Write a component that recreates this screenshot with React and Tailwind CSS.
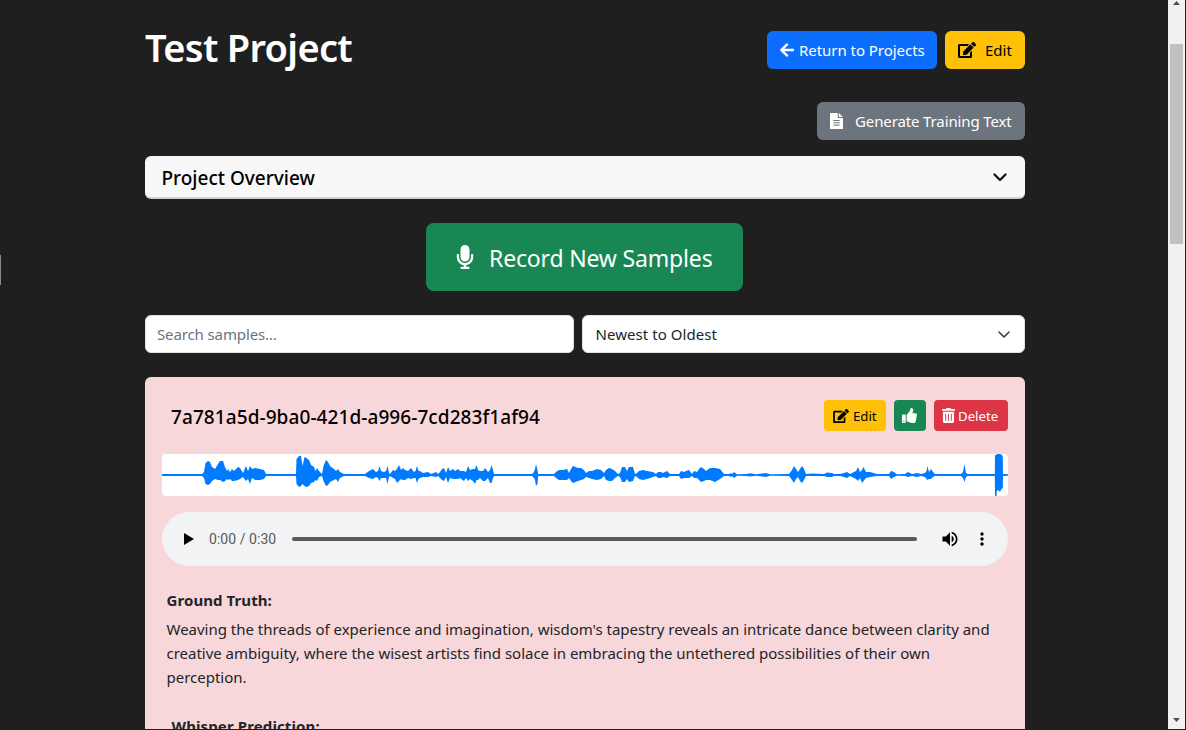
import React from "react";
import { FaArrowLeft, FaEdit, FaThumbsUp, FaTrashAlt, FaMicrophone } from "react-icons/fa";

// Envelope samples: [x, height above the centre line, depth below it]
const ENVELOPE = [
  [0, 1, 1], [40, 1, 1], [42, 3, 3], [43.5, 12, 9], [46, 14, 10], [48, 13, 9], [50, 8, 6], [53, 6, 4], [56, 11, 5], [58, 14, 5], [61, 14, 7], [63, 8, 6], [65, 4, 4],
  [66, 6, 5], [68, 3, 4], [70, 6, 6], [72, 4, 6], [76, 8, 5], [78, 7, 4], [81, 2, 2], [84, 9, 6], [86, 4, 4], [88, 9, 9], [90, 6, 3], [93, 7, 5], [98, 6, 5], [102, 5, 4], [104, 1, 1],
  [134, 1, 1], [134.5, 16, 9], [137, 19, 12], [139, 19, 11], [140.5, 9, 9], [142.5, 18, 11], [144.5, 17, 12], [147, 15, 11], [149, 10, 8], [152, 8, 7], [153.5, 4, 5], [155, 7, 6], [157, 4, 2], [160, 1, 1],
  [161.5, 9, 6], [164, 15, 11], [166, 13, 10], [168, 9, 7], [172, 6, 5], [174, 4, 4], [176, 6, 7], [178, 3, 3], [182, 1, 1], [203, 1, 1], [207, 4, 3], [211, 6, 4], [214, 3, 2],
  [216, 4, 3], [217.5, 9, 6], [219, 4, 3], [222, 3, 3], [224, 4, 3], [225.5, 9, 9], [227, 2, 2], [228, 1, 1], [231, 5, 3], [233, 4, 4], [235, 6, 8], [237, 10, 6], [239, 5, 4], [241, 7, 5], [243, 5, 5], [246, 4, 3], [249, 7, 4], [252, 3, 3], [253.5, 4, 3], [255, 9, 8], [256.5, 4, 4], [258, 4, 3],
  [261, 2, 2], [266, 3, 2], [269, 1, 1], [274, 3, 2], [276, 1, 1], [278, 3, 3], [280, 6, 5], [282, 7, 6], [284, 2, 2], [286, 8, 8], [288, 4, 3], [291, 6, 4], [293, 4, 4], [296, 6, 4], [298, 4, 3], [302, 4, 6], [304, 3, 3],
  [306, 9, 6], [308, 5, 4], [311, 6, 6], [313, 6, 9], [314.5, 10, 5], [316, 5, 5], [318, 4, 3], [321, 4, 6], [323, 7, 6], [326, 3, 3], [328, 5, 8], [329.5, 10, 8], [331, 5, 3], [332, 1, 1], [370, 1, 1], [372, 3, 3], [373, 6, 5], [374, 11, 11], [375.5, 5, 9], [376.2, 1, 1],
  [392, 1, 1], [394, 3, 3], [397, 5, 5], [401, 5, 5], [405, 6, 5], [407, 2, 3], [409, 6, 6], [411, 9, 8], [416, 7, 6], [419, 7, 5], [422, 5, 4], [424, 2, 2], [427, 4, 3], [430, 4, 4], [435, 6, 5], [439, 5, 4], [442, 2, 1],
  [444, 5, 5], [447, 7, 6], [450, 6, 6], [453, 4, 3], [456, 1, 1], [458, 2, 2], [460, 8, 7], [463, 8, 7], [465, 4, 4], [467, 8, 7], [471, 8, 6], [473, 1, 1], [475, 2, 2], [477, 4, 4], [481, 5, 5], [485, 4, 4], [491, 3, 2], [494, 1, 1],
  [496, 3, 3], [499, 3, 3], [501, 2, 2], [505, 4, 3], [508, 1, 1], [517, 1, 1], [519, 4, 4], [522, 3, 3], [524, 4, 3], [527, 5, 3], [530, 1, 1], [532, 4, 3], [535, 3, 3], [537, 6, 5], [539, 8, 7], [542, 6, 6], [544, 4, 5], [548, 7, 5], [553, 7, 7], [558, 6, 4], [562, 1, 1],
  [567, 1, 1], [569, 2, 2], [570, 1, 1], [572, 3, 3], [575, 0.7, 0.7], [584, 1, 1], [588, 1.7, 1.5], [594, 0.7, 0.7], [604, 2, 2], [608, 0.7, 0.7], [627, 1, 1], [630, 5, 5], [632, 9, 8], [634, 6, 4], [636, 3, 2], [638, 6, 6], [640, 9, 8], [642, 6, 5], [644, 1, 1],
  [650, 1.5, 1], [656, 1.3, 1], [662, 1, 1], [665, 2.5, 2], [670, 2, 2], [672, 1, 1], [678, 1, 1], [682, 2, 2], [685, 3, 3], [688, 1, 1], [692, 3, 3], [694, 4, 4], [696, 8, 6], [698, 3, 3], [700, 5, 8], [701.5, 8, 6], [704, 3, 3], [708, 3, 2], [715, 1, 1], [727, 1, 1],
  [729, 4, 4], [732, 3, 2], [735, 0.8, 0.8], [743, 1, 1], [746, 3, 2], [750, 1, 1], [755, 2, 2], [759, 1, 1], [763, 2, 2], [764.5, 4, 4], [765.5, 9, 5], [767, 3, 4], [769, 6, 4], [771, 3, 2], [773, 1, 1], [799, 1, 1],
  [801, 3, 3], [802.5, 11, 7], [804, 2, 2], [806, 1, 1], [832.8, 1, 1], [833, 20, 21], [834.5, 20, 21], [834.8, 21, 16], [836, 21, 15], [838, 21, 17], [840, 20, 13], [840.8, 18, 14], [841, 1, 1], [843, 1, 1], [846, 0.7, 0.7],
];

const top = ENVELOPE.map(([x, up]) => `${x},${21 - up}`);
const bottom = ENVELOPE.map(([x, , down]) => `${x},${21 + down}`).reverse();

function Waveform() {
  return (
    <svg className="mt-[23px] block h-[42px] w-[846px] rounded-[4px] bg-white" viewBox="0 0 846 42">
      <polygon points={[...top, ...bottom].join(" ")} fill="#007bff" />
    </svg>
  );
}

function AudioPlayer() {
  return (
    <div className="mt-4 flex h-[54px] w-[846px] items-center rounded-full bg-[#f1f3f4] pl-[22px]">
      <svg className="h-3 w-[10px] shrink-0" viewBox="0 0 10 12"><path d="M0 0v12l10-6z" /></svg>
      <span className="ml-[15px] w-[83px] shrink-0 whitespace-nowrap font-['Roboto',sans-serif] text-[14px] leading-5 tracking-[0.05px] text-[#5a5a5a]">0:00 / 0:30</span>
      <div className="h-1 w-[625px] shrink-0 rounded-full bg-[#5a5a5a]" />
      <svg className="ml-[23px] h-5 w-5 shrink-0" viewBox="0 0 24 24">
        <path d="M3 9v6h4l5 5V4L7 9H3zm13.5 3c0-1.77-1.02-3.29-2.5-4.03v8.05c1.48-.73 2.5-2.25 2.5-4.02zM14 3.23v2.06c2.89.86 5 3.54 5 6.71s-2.11 5.85-5 6.71v2.06c4.01-.91 7-4.49 7-8.77s-2.99-7.86-7-8.77z" />
      </svg>
      <svg className="ml-[12px] h-5 w-5 shrink-0" viewBox="0 0 24 24">
        <path d="M12 8c1.1 0 2-.9 2-2s-.9-2-2-2-2 .9-2 2 .9 2 2 2zm0 2c-1.1 0-2 .9-2 2s.9 2 2 2 2-.9 2-2-.9-2-2-2zm0 6c-1.1 0-2 .9-2 2s.9 2 2 2 2-.9 2-2-.9-2-2-2z" />
      </svg>
    </div>
  );
}

function Header() {
  return (
    <header className="flex h-[69px] items-end justify-between">
      <h1 className="mb-[-2px] whitespace-nowrap text-[38px] font-semibold leading-[48px] tracking-[-0.68px] text-white">Test Project</h1>
      <div className="flex gap-2">
        <button className="flex h-[38px] w-[170px] items-center whitespace-nowrap rounded-[6px] bg-[#0d6efd] pl-[13px] text-white">
          <FaArrowLeft className="mr-[5px] h-4 w-[14px] shrink-0" />
          <span className="tracking-[-0.04px]">Return to Projects</span>
        </button>
        <button className="flex h-[38px] w-20 items-center rounded-[6px] bg-[#ffc107] pl-[13px] text-black">
          <FaEdit className="mr-[9px] h-4 w-[18px]" />
          <span>Edit</span>
        </button>
      </div>
    </header>
  );
}

function FileIcon() {
  return (
    <svg className="mr-[12px] h-4 w-[13px] shrink-0" viewBox="0 0 13 16">
      <path d="M0 .5Q0 0 .5 0H7.8v4.4q0 .6.6.6H13v10.5q0 .5-.5.5H.5q-.5 0-.5-.5z" fill="#fff" />
      <path d="M8.8 0 13 4H8.8z" fill="#fff" />
      <path d="M3.3 7.5h6.4M3.3 9.8h6.4M3.3 12.1h6.4" stroke="#6c757d" strokeWidth="1" />
    </svg>
  );
}

function SampleCard() {
  return (
    <section className="mt-6 h-[353px] overflow-hidden rounded-t-[6px] bg-[#f8d7da] px-[17px] pt-[23px]">
      <div className="flex h-[31px] items-center justify-between">
        <h2 className="ml-[9px] mt-[2px] whitespace-nowrap text-[19px] font-medium tracking-[0.08px] text-black">7a781a5d-9ba0-421d-a996-7cd283f1af94</h2>
        <div className="flex gap-2 text-[13.2px]">
          <button className="flex h-[31px] w-[62px] items-center rounded-[4px] bg-[#ffc107] pl-[9px] text-black">
            <FaEdit className="mr-1 h-[14px] w-4" />
            <span>Edit</span>
          </button>
          <button className="flex h-[31px] w-8 items-center justify-center rounded-[4px] bg-[#198754] pr-px text-white">
            <FaThumbsUp className="size-[15px]" />
          </button>
          <button className="flex h-[31px] w-[74px] items-center rounded-[4px] bg-[#dc3545] pl-2 text-white">
            <FaTrashAlt className="mr-[3px] h-[15px] w-[13px]" />
            <span>Delete</span>
          </button>
        </div>
      </div>
      <Waveform />
      <AudioPlayer />
      <div className="ml-[4.5px] mt-[22px]">
        <h3 className="h-6 whitespace-nowrap text-[15px] font-bold leading-6 tracking-[0.08px]">Ground Truth:</h3>
        <p className="mt-[5px] whitespace-nowrap text-[15px] leading-6 tracking-[-0.015px]">
          <span className="block">Weaving the threads of experience and imagination, wisdom's tapestry reveals an intricate dance between clarity and</span>
          <span className="block">creative ambiguity, where the wisest artists find solace in embracing the untethered possibilities of their own</span>
          <span className="block">perception.</span>
        </p>
        <h3 className="ml-[5px] mt-[25px] whitespace-nowrap text-[15px] font-bold leading-6 tracking-[0.12px]">Whisper Prediction:</h3>
      </div>
    </section>
  );
}

function Scrollbar() {
  return (
    <div className="mr-px flex h-[729px] w-[17px] flex-col items-center bg-[#f1f1f1]">
      <svg className="mt-[1px] h-1 w-[7px]" viewBox="0 0 7 4"><path d="M0 4h7L3.5 0z" fill="#505050" /></svg>
      <div className="mt-[39px] h-[200px] w-[13px] bg-[#c1c1c1]" />
      <svg className="mb-[7px] mt-auto h-1 w-[7px]" viewBox="0 0 7 4"><path d="M0 0h7L3.5 4z" fill="#505050" /></svg>
    </div>
  );
}

export default function App() {
  return (
    <div className="flex h-[730px] w-[1186px] overflow-hidden bg-[#1f1f1f] font-['Noto_Sans',sans-serif] text-[15px] leading-6 text-[#212529]">
      <div className="mt-[255px] h-[30px] w-px bg-[#8a8a8a]" />
      <main className="ml-[144px] h-[729px] w-[880px] overflow-hidden">
        <Header />
        <div className="mt-[33px] flex justify-end">
          <button className="flex h-[38px] w-[208px] items-center whitespace-nowrap rounded-[6px] bg-[#6c757d] pl-[13px] text-white">
            <FileIcon />
            <span className="tracking-[-0.12px]">Generate Training Text</span>
          </button>
        </div>
        <div className="mt-4 flex h-[43px] items-center justify-between rounded-[6px] border-b-2 border-[#d0d2d4] bg-[#f8f8f8] pl-[16.5px] pr-[17px]">
          <span className="mt-[2px] whitespace-nowrap text-[19px] font-medium text-black">Project Overview</span>
          <svg className="mr-px mt-[2px] h-[9px] w-[14px]" viewBox="0 0 14 9"><path d="M1.5 1.5 7 7l5.5-5.5" fill="none" stroke="#111" strokeWidth="2.3" strokeLinecap="round" strokeLinejoin="round" /></svg>
        </div>
        <div className="mt-6 flex justify-center pr-px">
          <button className="flex h-[68px] w-[317px] items-center whitespace-nowrap rounded-[8px] bg-[#198754] pl-[30px] text-[23px] text-white">
            <FaMicrophone className="mr-[15px] h-6 w-[18px] shrink-0" />
            <span className="mt-[2px] tracking-[-0.17px]">Record New Samples</span>
          </button>
        </div>
        <div className="mt-6 flex gap-2">
          <div className="flex h-[38px] w-[429px] items-center rounded-[6px] border border-[#dee2e6] bg-white pl-[11px] text-[#6c757d]">
            <span className="tracking-[-0.12px]">Search samples...</span>
          </div>
          <div className="flex h-[38px] w-[443px] items-center justify-between rounded-[6px] border border-[#dee2e6] bg-white pl-[12.5px] pr-[14px]">
            <span className="tracking-[0.05px]">Newest to Oldest</span>
            <svg className="h-[7px] w-3" viewBox="0 0 12 7"><path d="M1 1l5 5 5-5" fill="none" stroke="#343a40" strokeWidth="1.5" strokeLinecap="round" strokeLinejoin="round" /></svg>
          </div>
        </div>
        <SampleCard />
      </main>
      <div className="ml-[143px]"><Scrollbar /></div>
    </div>
  );
}
